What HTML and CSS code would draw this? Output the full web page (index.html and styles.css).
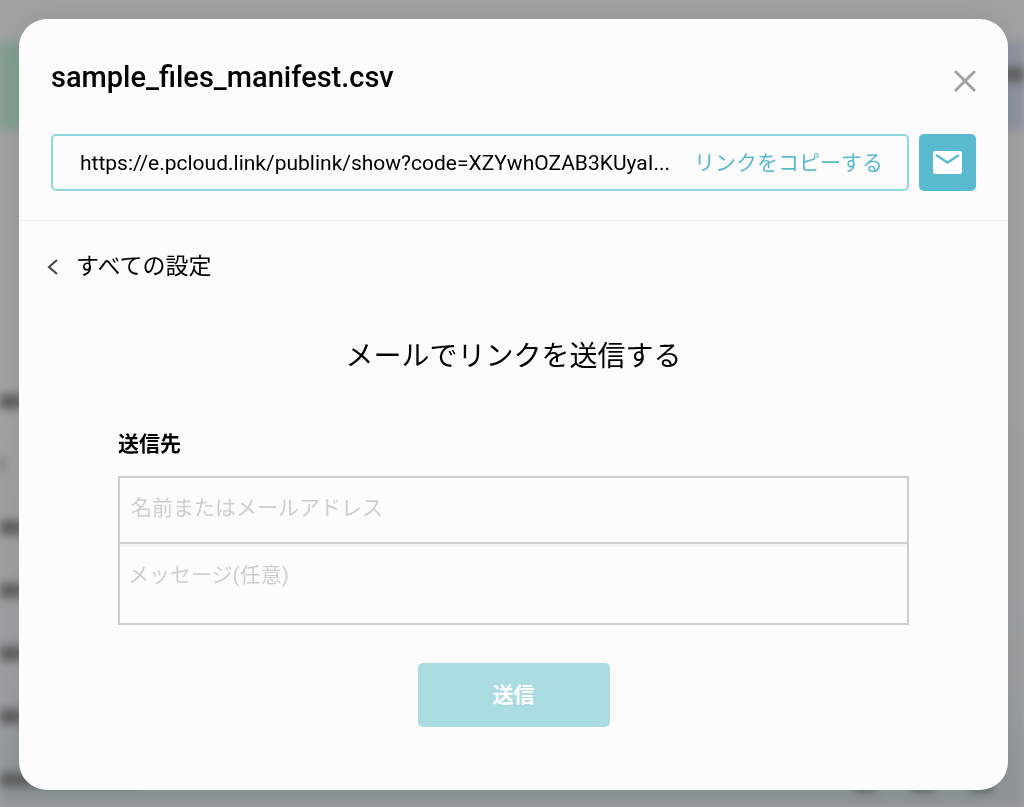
FILE: index.html
```html
<!DOCTYPE html>
<html lang="ja">
  <head>
    <meta charset="UTF-8" />
    <meta name="viewport" content="width=device-width, initial-scale=1.0" />
    <title>sample_files_manifest.csv</title>
    <link rel="stylesheet" href="styles.css">
  </head>
  <body>
    <!-- blurred file list behind the dialog -->
    <div class="backdrop" aria-hidden="true">
      <div class="toolbar">
        <span class="tool green"></span>
        <span class="tool blue"><i class="smudge"></i></span>
      </div>
      <div class="files">
        <i class="smudge"></i>
        <i class="smudge short"></i>
        <i class="smudge"></i>
        <i class="smudge"></i>
        <i class="smudge"></i>
        <i class="smudge"></i>
        <div class="last-row">
          <i class="smudge wide"></i>
          <i class="smudge dot"></i>
          <i class="smudge dot"></i>
          <i class="smudge dot"></i>
        </div>
      </div>
    </div>

    <div class="modal" role="dialog" aria-labelledby="file-name">
      <header class="modal-header">
        <div class="title-row">
          <h1 id="file-name">sample_files_manifest.csv</h1>
          <button type="button" class="close" aria-label="閉じる">
            <svg width="22" height="22" viewBox="0 0 22 22">
              <path d="M2 2 L20 20 M20 2 L2 20" />
            </svg>
          </button>
        </div>
        <div class="link-row">
          <div class="link-box">
            <input type="text" class="link-url" aria-label="リンク" readonly value="https://e.pcloud.link/publink/show?code=XZYwhOZAB3KUyaI..." />
            <button type="button" class="copy">リンクをコピーする</button>
          </div>
          <button type="button" class="mail" aria-label="メール">
            <svg width="29" height="23" viewBox="0 0 29 23">
              <rect width="29" height="23" rx="2" fill="#fff" />
              <path d="M3 4 L14.5 11.5 L26 4" fill="none" stroke="#58b9cf" stroke-width="2.4" />
            </svg>
          </button>
        </div>
      </header>

      <main class="modal-body">
        <a href="#" class="back">
          <svg width="11" height="16" viewBox="0 0 11 16">
            <path d="M10 1 L2 8 L10 15" />
          </svg>
          すべての設定
        </a>
        <h2>メールでリンクを送信する</h2>
        <form class="send-form">
          <label for="recipient">送信先</label>
          <div class="fields">
            <input type="text" id="recipient" placeholder="名前またはメールアドレス" />
            <textarea id="message" aria-label="メッセージ" placeholder="メッセージ(任意)"></textarea>
          </div>
          <button type="button" class="send">送信</button>
        </form>
      </main>
    </div>
  </body>
</html>
```
FILE: styles.css
```css
* {
  box-sizing: border-box;
}

body {
  margin: 0;
  padding: 19px 16px 17px 19px;
  min-height: 100vh;
  display: flex;
  background-color: #a2a2a2;
  font-family: Roboto, "Noto Sans CJK JP", sans-serif;
  color: #000;
}

button,
input,
textarea {
  font-family: inherit;
  margin: 0;
}

button {
  padding: 0;
  border: none;
  cursor: pointer;
}

/* Backdrop */
.backdrop {
  position: fixed;
  inset: 0;
  overflow: hidden;
  filter: blur(4px);
  background: linear-gradient(#a2a2a2 50%, #9b9e9e 85%, #8f9597 98%);
}

.toolbar {
  display: flex;
  justify-content: space-between;
  margin-top: 42px;
  height: 88px;
}

.tool {
  width: 120px;
}

.green {
  background-color: #829e8c;
}

.blue {
  display: flex;
  justify-content: flex-end;
  padding-top: 25px;
  background-color: #8c92a0;
}

.files {
  display: flex;
  flex-direction: column;
  gap: 48px;
  margin-top: 264px;
}

.smudge {
  width: 24px;
  height: 15px;
  background-color: #5c5e5e;
}

.short {
  width: 3px;
}

.last-row {
  display: flex;
  gap: 36px;
  padding-right: 32px;
}

.wide {
  width: 140px;
  margin-right: auto;
}

.dot {
  width: 22px;
  height: 20px;
}

/* Dialog */
.modal {
  position: relative;
  flex: 1;
  border-radius: 28px;
  background-color: #fcfcfc;
  box-shadow: 0 0 28px rgba(110, 125, 125, 0.3);
}

.modal-header {
  padding: 36px 32px 29px;
  border-bottom: 1px solid #f0f0f0;
}

.title-row {
  display: flex;
  justify-content: space-between;
  align-items: center;
  height: 44px;
  margin-bottom: 35px;
}

h1 {
  margin: 0;
  font-size: 29px;
  font-weight: 500;
  line-height: 40px;
}

.close {
  display: flex;
  padding-top: 8px;
  background: none;
}

.close path {
  fill: none;
  stroke: #a3a3a3;
  stroke-width: 3;
  stroke-linecap: round;
}

.link-row {
  display: flex;
  gap: 10px;
}

.link-box {
  flex: 1;
  display: flex;
  align-items: center;
  height: 57px;
  padding: 0 24px 0 27px;
  border: 2px solid #8fd6e3;
  border-radius: 5px;
}

.link-url {
  flex: 1;
  min-width: 0;
  padding: 0;
  border: none;
  outline: none;
  background: none;
  color: #000;
  font-size: 21px;
}

.copy {
  padding-bottom: 4px;
  background: none;
  color: #58b9cf;
  font-size: 21px;
}

.mail {
  display: flex;
  justify-content: center;
  align-items: center;
  width: 57px;
  height: 57px;
  border-radius: 5px;
  background-color: #58b9cf;
}

.modal-body {
  padding: 28px;
}

.back {
  display: inline-flex;
  align-items: center;
  gap: 18px;
  color: #000;
  font-size: 23px;
  line-height: 36px;
  text-decoration: none;
}

.back path {
  fill: none;
  stroke: #444;
  stroke-width: 2;
}

h2 {
  margin: 50px 0 0;
  font-size: 28px;
  font-weight: 400;
  line-height: 44px;
  text-align: center;
}

.send-form {
  display: flex;
  flex-direction: column;
  margin: 49px 71px 0;
}

label {
  margin-bottom: 16px;
  font-size: 21px;
  font-weight: 700;
  line-height: 32px;
}

.fields {
  display: flex;
  flex-direction: column;
  border: 2px solid #cecece;
}

#recipient,
#message {
  border: none;
  outline: none;
  resize: none;
  background: none;
  font-size: 21px;
}

#recipient {
  height: 66px;
  padding: 0 11px 4px;
  border-bottom: 2px solid #cecece;
}

#message {
  height: 79px;
  padding: 12px 8px;
  line-height: 32px;
  border-top: 3px solid #f4f4f4;
}

::placeholder {
  color: #cecece;
}

.send {
  align-self: center;
  width: 192px;
  height: 64px;
  margin-top: 38px;
  padding-bottom: 4px;
  border-radius: 5px;
  background-color: #aadce2;
  color: #fff;
  font-size: 21px;
  font-weight: 700;
}
```
